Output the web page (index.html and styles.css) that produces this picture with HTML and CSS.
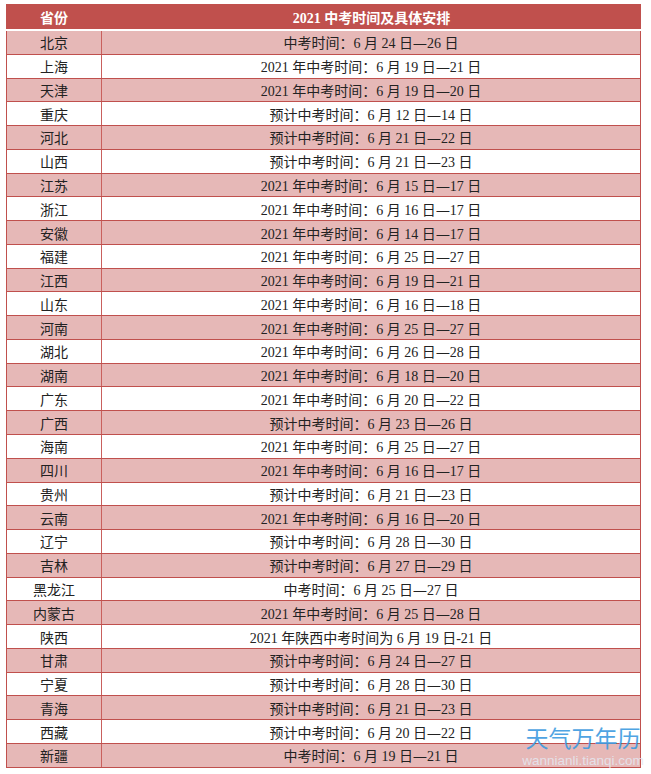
FILE: index.html
```html
<!DOCTYPE html>
<html lang="zh">
<head>
<meta charset="utf-8">
<link rel="stylesheet" href="styles.css">
</head>
<body>
<div class="sheet">
  <div class="hd"><div class="c1">省份</div><div class="c2">2021 中考时间及具体安排</div></div>
  <div class="rows">
    <div class="row"><div class="c1">北京</div><div class="c2">中考时间：6 月 24 日<span class="d">—</span>26 日</div></div>
    <div class="row"><div class="c1">上海</div><div class="c2">2021 年中考时间：6 月 19 日<span class="d">—</span>21 日</div></div>
    <div class="row"><div class="c1">天津</div><div class="c2">2021 年中考时间：6 月 19 日<span class="d">—</span>20 日</div></div>
    <div class="row"><div class="c1">重庆</div><div class="c2">预计中考时间：6 月 12 日<span class="d">—</span>14 日</div></div>
    <div class="row"><div class="c1">河北</div><div class="c2">预计中考时间：6 月 21 日<span class="d">—</span>22 日</div></div>
    <div class="row"><div class="c1">山西</div><div class="c2">预计中考时间：6 月 21 日<span class="d">—</span>23 日</div></div>
    <div class="row"><div class="c1">江苏</div><div class="c2">2021 年中考时间：6 月 15 日<span class="d">—</span>17 日</div></div>
    <div class="row"><div class="c1">浙江</div><div class="c2">2021 年中考时间：6 月 16 日<span class="d">—</span>17 日</div></div>
    <div class="row"><div class="c1">安徽</div><div class="c2">2021 年中考时间：6 月 14 日<span class="d">—</span>17 日</div></div>
    <div class="row"><div class="c1">福建</div><div class="c2">2021 年中考时间：6 月 25 日<span class="d">—</span>27 日</div></div>
    <div class="row"><div class="c1">江西</div><div class="c2">2021 年中考时间：6 月 19 日<span class="d">—</span>21 日</div></div>
    <div class="row"><div class="c1">山东</div><div class="c2">2021 年中考时间：6 月 16 日<span class="d">—</span>18 日</div></div>
    <div class="row"><div class="c1">河南</div><div class="c2">2021 年中考时间：6 月 25 日<span class="d">—</span>27 日</div></div>
    <div class="row"><div class="c1">湖北</div><div class="c2">2021 年中考时间：6 月 26 日<span class="d">—</span>28 日</div></div>
    <div class="row"><div class="c1">湖南</div><div class="c2">2021 年中考时间：6 月 18 日<span class="d">—</span>20 日</div></div>
    <div class="row"><div class="c1">广东</div><div class="c2">2021 年中考时间：6 月 20 日<span class="d">—</span>22 日</div></div>
    <div class="row"><div class="c1">广西</div><div class="c2">预计中考时间：6 月 23 日<span class="d">—</span>26 日</div></div>
    <div class="row"><div class="c1">海南</div><div class="c2">2021 年中考时间：6 月 25 日<span class="d">—</span>27 日</div></div>
    <div class="row"><div class="c1">四川</div><div class="c2">2021 年中考时间：6 月 16 日<span class="d">—</span>17 日</div></div>
    <div class="row"><div class="c1">贵州</div><div class="c2">预计中考时间：6 月 21 日<span class="d">—</span>23 日</div></div>
    <div class="row"><div class="c1">云南</div><div class="c2">2021 年中考时间：6 月 16 日<span class="d">—</span>20 日</div></div>
    <div class="row"><div class="c1">辽宁</div><div class="c2">预计中考时间：6 月 28 日<span class="d">—</span>30 日</div></div>
    <div class="row"><div class="c1">吉林</div><div class="c2">预计中考时间：6 月 27 日<span class="d">—</span>29 日</div></div>
    <div class="row"><div class="c1">黑龙江</div><div class="c2">中考时间：6 月 25 日<span class="d">—</span>27 日</div></div>
    <div class="row"><div class="c1">内蒙古</div><div class="c2">2021 年中考时间：6 月 25 日<span class="d">—</span>28 日</div></div>
    <div class="row"><div class="c1">陕西</div><div class="c2">2021 年陕西中考时间为 6 月 19 日-21 日</div></div>
    <div class="row"><div class="c1">甘肃</div><div class="c2">预计中考时间：6 月 24 日<span class="d">—</span>27 日</div></div>
    <div class="row"><div class="c1">宁夏</div><div class="c2">预计中考时间：6 月 28 日<span class="d">—</span>30 日</div></div>
    <div class="row"><div class="c1">青海</div><div class="c2">预计中考时间：6 月 21 日<span class="d">—</span>23 日</div></div>
    <div class="row"><div class="c1">西藏</div><div class="c2">预计中考时间：6 月 20 日<span class="d">—</span>22 日</div></div>
    <div class="row"><div class="c1">新疆</div><div class="c2">中考时间：6 月 19 日<span class="d">—</span>21 日</div></div>
  </div>
  <div class="mark">
    <div class="mark-cn">天气万年历</div>
    <div class="mark-en">wannianli.tianqi.com</div>
  </div>
</div>
</body>
</html>
```
FILE: styles.css
```css
html, body {
  margin: 0;
  padding: 0;
  background: #fff;
}
body {
  font-family: "Liberation Serif", "Noto Sans CJK SC", serif;
  font-size: 14px;
  color: #222;
}
.sheet {
  position: relative;
  margin: 4px 0 0 6px;
  width: 635px;
}
.hd {
  display: grid;
  grid-template-columns: 96px 1fr;
  height: 25px;
  align-items: center;
  background: #c0504d;
  color: #fff;
  font-weight: bold;
  margin-bottom: 2px;
  text-align: center;
}
.rows {
  border-left: 1px solid #c0504d;
  border-right: 1px solid #c0504d;
}
.row {
  display: grid;
  grid-template-columns: 95px 1fr;
  height: 23.77px;
  box-sizing: border-box;
  border-bottom: 1px solid #c0504d;
  align-items: stretch;
  text-align: center;
}
.row:nth-child(odd) {
  background: #e6b8b7;
}
.row .c1 {
  border-right: 1px solid #c9605d;
  display: flex;
  align-items: center;
  justify-content: center;
}
.row .c2 {
  display: flex;
  align-items: center;
  justify-content: center;
  white-space: pre;
}
.d {
  font-family: "Noto Sans CJK SC", sans-serif;
  display: inline-block;
  width: 14px;
  text-align: center;
  transform: scaleX(1.15);
}
.mark {
  position: absolute;
  left: 514px;
  top: 721px;
  width: 126px;
  text-align: center;
  pointer-events: none;
}
.mark-cn {
  font-family: "Noto Sans CJK SC", sans-serif;
  font-size: 23px;
  line-height: 24px;
  color: #3d9be0;
  opacity: 0.9;
}
.mark-en {
  font-family: "Liberation Sans", sans-serif;
  font-size: 13.5px;
  line-height: 13px;
  color: rgba(228, 232, 242, 0.85);
  margin-top: 5px;
}
```
